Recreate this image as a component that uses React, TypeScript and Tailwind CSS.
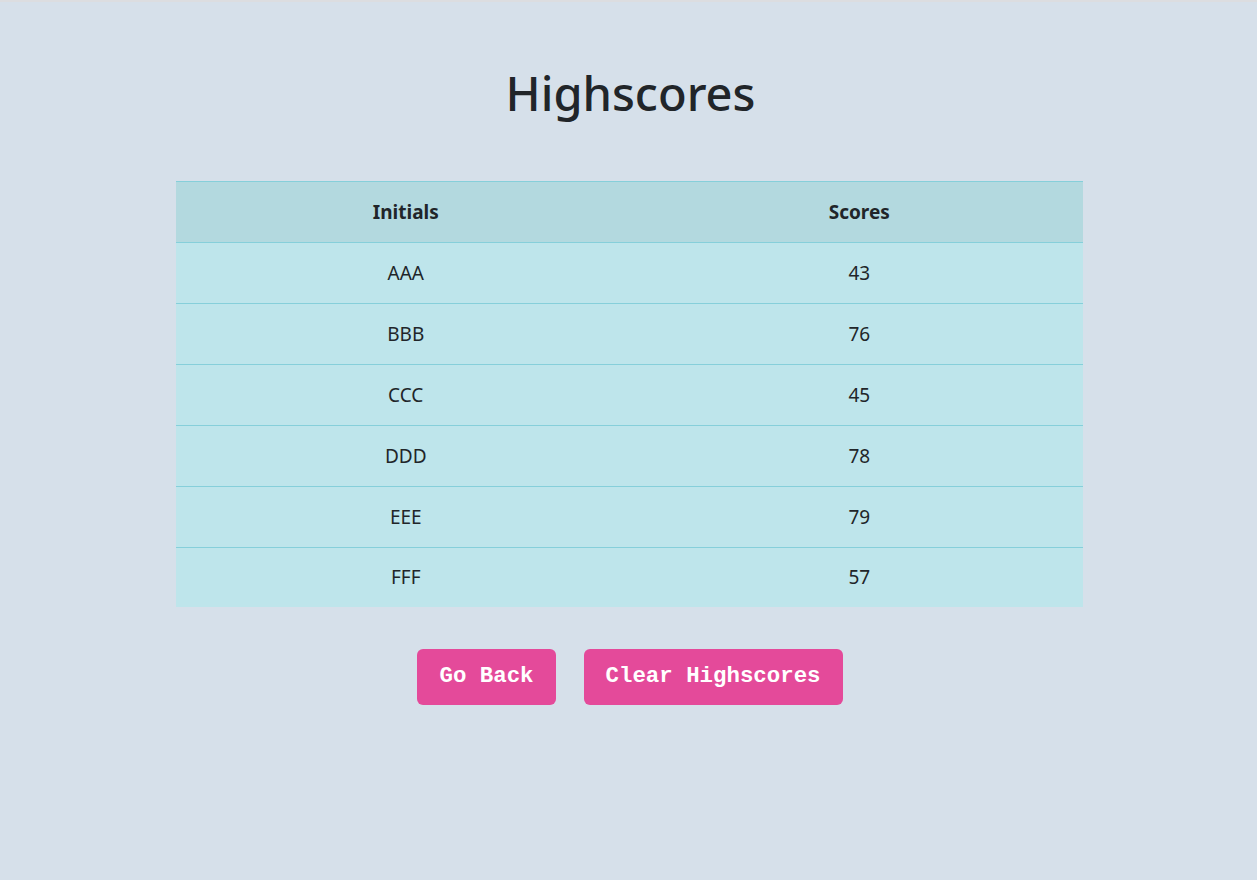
const scores = [
  { initials: "AAA", score: 43 },
  { initials: "BBB", score: 76 },
  { initials: "CCC", score: 45 },
  { initials: "DDD", score: 78 },
  { initials: "EEE", score: 79 },
  { initials: "FFF", score: 57 },
];

export default function App() {
  return (
    <div
      className="min-h-screen bg-[#d6e0ea] border-t-2 border-[#dcdde0] text-[#212529]"
      style={{ fontFamily: '"Noto Sans", "Open Sans", sans-serif' }}
    >
      <h1 className="text-center text-[47px] font-medium leading-none pt-[68px] pl-[4px]">Highscores</h1>
      <table className="w-[907px] mx-auto mt-[64px] border-collapse text-[19px] translate-x-[1px]">
        <thead>
          <tr className="bg-[#b3d9df] border-t border-[#86cfda]">
            <th className="h-[61px] w-1/2 pl-[6px] font-bold">Initials</th>
            <th className="h-[61px] w-1/2 pl-[6px] font-bold">Scores</th>
          </tr>
        </thead>
        <tbody>
          {scores.map((row, i) => (
            <tr key={row.initials} className="bg-[#bee5eb] border-t border-[#86cfda]">
              <td className={(i === scores.length - 1 ? "h-[59px]" : "h-[61px]") + " pl-[6px] text-center"}>
                {row.initials}
              </td>
              <td className="pl-[6px] text-center">{row.score}</td>
            </tr>
          ))}
        </tbody>
      </table>
      <div
        className="flex justify-center gap-[28px] mt-[42px] pl-[3px]"
        style={{ fontFamily: '"Liberation Mono", "Courier New", monospace' }}
      >
        <button className="h-[56px] px-[22px] rounded-md bg-[#e44a9a] text-white font-bold text-[22.4px]">
          Go Back
        </button>
        <button className="h-[56px] px-[22px] rounded-md bg-[#e44a9a] text-white font-bold text-[22.4px]">
          Clear Highscores
        </button>
      </div>
    </div>
  );
}
